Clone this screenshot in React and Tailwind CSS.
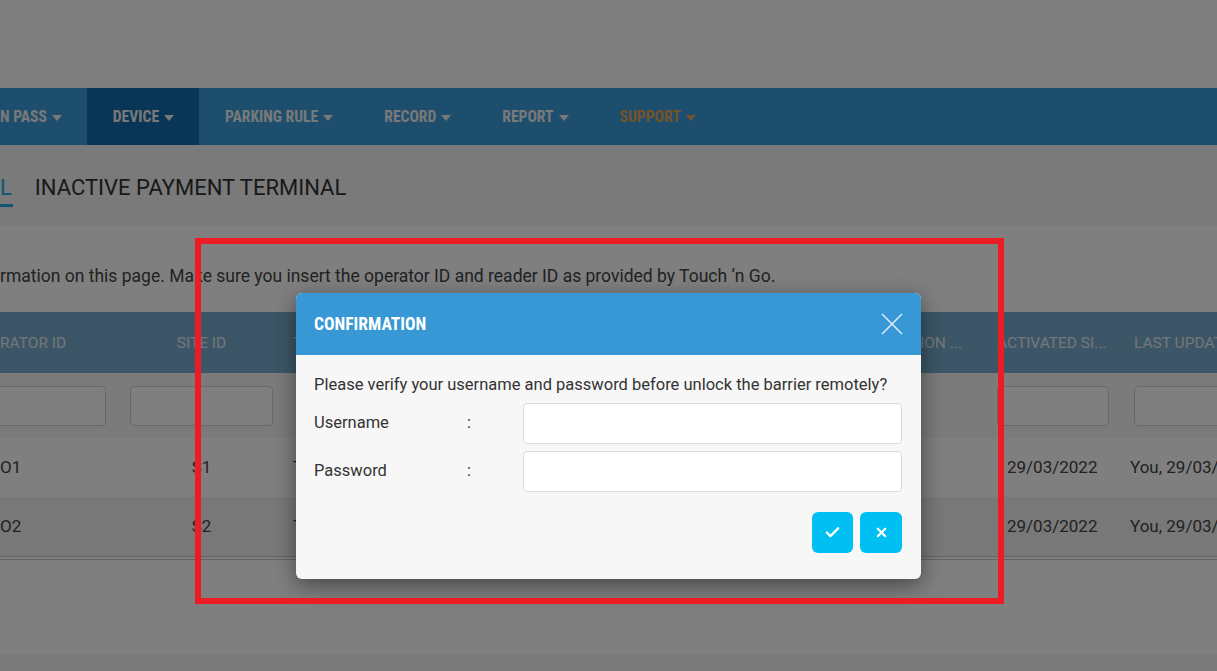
import { Check, X } from "lucide-react";

const NAV = [
  { label: "N PASS" },
  { label: "DEVICE", active: true },
  { label: "PARKING RULE" },
  { label: "RECORD" },
  { label: "REPORT" },
  { label: "SUPPORT", accent: true },
];

const ROWS = [
  { op: "O1", site: "S1", term: "T", date: "29/03/2022", by: "You, 29/03/2022 10:21" },
  { op: "O2", site: "S2", term: "T", date: "29/03/2022", by: "You, 29/03/2022 10:24" },
];

const COLS = "grid grid-cols-[118px_167px_200px_200px_300px_136px_1fr]";

function Caret({ className }) {
  return (
    <svg width="10" height="6" viewBox="0 0 10 6" className={className}>
      <path d="M0 0h10L5 6z" fill="currentColor" />
    </svg>
  );
}

function NavBar() {
  return (
    <nav className="flex h-[57px] bg-[#3a9cdc] shadow-[0_3px_4px_rgba(0,0,0,0.25)] font-['Roboto_Condensed',Roboto,sans-serif] text-[15.6px] font-bold">
      {NAV.map((item) => (
        <div
          key={item.label}
          className={`flex items-center gap-[5px] pt-[3px] pr-[25px] ${item.label === "N PASS" ? "pl-0" : "pl-[26px]"} ${
            item.active ? "bg-[#126cac]" : ""
          } ${item.accent ? "text-[#e8a94f]" : "text-[#f2f2f2]"}`}
        >
          <span>{item.label}</span>
          <Caret />
        </div>
      ))}
    </nav>
  );
}

function FilterInput({ className = "" }) {
  return (
    <div className={`h-[40px] rounded-[4px] border border-[#d2d2d2] bg-white ${className}`} />
  );
}

function Table() {
  return (
    <div className="font-[Roboto,'Liberation_Sans',sans-serif]">
      <div className={`${COLS} h-[61px] items-center pt-[2px] bg-[#78acce] text-[15.5px] text-[#e6edf2] uppercase`}>
        <div className="whitespace-nowrap">rator ID</div>
        <div className="text-center">Site ID</div>
        <div className="pl-[8px]">Terminal ID</div>
        <div className="pl-[8px]">Reader ID</div>
        <div className="pr-[23px] text-right">Location ...</div>
        <div className="pl-[12px] whitespace-nowrap">Activated Si...</div>
        <div className="overflow-hidden whitespace-nowrap pl-[13px]">Last Updated</div>
      </div>
      <div className={`${COLS} h-[65px] items-center bg-[#f6f6f6]`}>
        <FilterInput className="mr-[12px] rounded-l-none border-l-0" />
        <FilterInput className="mx-[12px]" />
        <FilterInput className="mx-[12px]" />
        <FilterInput className="mx-[12px]" />
        <div />
        <FilterInput className="mx-[12px]" />
        <FilterInput className="-mr-[40px] ml-[13px]" />
      </div>
      {ROWS.map((row, i) => (
        <div
          key={row.op}
          className={`${COLS} h-[59px] items-center pt-[1px] text-[17px] text-[#444] ${i % 2 ? "bg-[#f0f0f0]" : "bg-[#fefefe]"}`}
        >
          <div>{row.op}</div>
          <div className="text-center">{row.site}</div>
          <div className="pl-[8px]">{row.term}</div>
          <div />
          <div />
          <div className="pl-[22px]">{row.date}</div>
          <div className="overflow-hidden whitespace-nowrap pl-[9px]">{row.by}</div>
        </div>
      ))}
      <div className="h-[4px] border-y border-[#c8c8c8]" />
    </div>
  );
}

function ConfirmDialog() {
  return (
    <div className="w-[625px] overflow-hidden rounded-[6px] bg-[#f7f7f7] shadow-[0_6px_22px_rgba(0,0,0,0.45)]">
      <div className="flex h-[62px] items-center justify-between bg-[#3798d5] pl-[18px] pr-[18px]">
        <h2 className="font-['Roboto_Condensed',Roboto,sans-serif] text-[17.5px] font-bold text-white">
          CONFIRMATION
        </h2>
        <svg width="22" height="22" viewBox="0 0 22 22" className="text-[#d8ecf8]">
          <path d="M1 1l20 20M21 1L1 21" stroke="currentColor" strokeWidth="1.6" fill="none" />
        </svg>
      </div>
      <div className="px-[18px] pb-[26px] pt-[20px] font-[Roboto,'Liberation_Sans',sans-serif] text-[16.5px] text-[#333]">
        <p className="leading-[20px]">
          Please verify your username and password before unlock the barrier remotely?
        </p>
        <div className="mt-[8px] flex flex-col gap-[7px] pr-px">
          {["Username", "Password"].map((label) => (
            <div key={label} className="flex items-center">
              <span className="w-[153px]">{label}</span>
              <span className="w-[56px]">:</span>
              <input
                type={label === "Password" ? "password" : "text"}
                className="h-[41px] flex-1 rounded-[4px] border border-[#dcdcdc] bg-white px-3 outline-none"
              />
            </div>
          ))}
        </div>
        <div className="mt-[20px] flex justify-end gap-[7px] pr-px">
          <button className="flex h-[41px] w-[41px] items-center justify-center rounded-[6px] bg-[#00bff3] text-white">
            <Check size={17} strokeWidth={3.4} />
          </button>
          <button className="flex h-[41px] w-[42px] items-center justify-center rounded-[6px] bg-[#00bff3] text-white">
            <X size={15} strokeWidth={3.4} />
          </button>
        </div>
      </div>
    </div>
  );
}

export default function App() {
  return (
    <div className="relative h-[671px] w-[1217px] overflow-hidden bg-white">
      <div className="flex h-full flex-col">
        <div className="h-[88px] shrink-0" />
        <NavBar />
        <div className="flex h-[80px] shrink-0 items-center gap-[22px] pt-[4px] bg-[#f4f4f4] font-[Roboto,'Liberation_Sans',sans-serif] text-[22px] text-[#333]">
          <span className="border-b-[3px] border-[#25aae1] pt-[3px] pr-[1px] text-[#25aae1]">L</span>
          <span>INACTIVE PAYMENT TERMINAL</span>
        </div>
        <div className="flex h-[87px] shrink-0 items-center pt-[16px] font-[Roboto,'Liberation_Sans',sans-serif] text-[17.5px] text-[#444]">
          rmation on this page. Make sure you insert the operator ID and reader ID as provided by Touch ‘n Go.
        </div>
        <Table />
        <div className="flex-1" />
        <div className="h-[17px] shrink-0 bg-[#f6f6f6]" />
      </div>

      <div className="absolute inset-0 bg-black/50 pl-[296px] pt-[293px]">
        <ConfirmDialog />
      </div>

      <div className="pointer-events-none absolute left-[195px] top-[238px] h-[366px] w-[809px] border-[6px] border-[#ed1c24]" />
    </div>
  );
}
